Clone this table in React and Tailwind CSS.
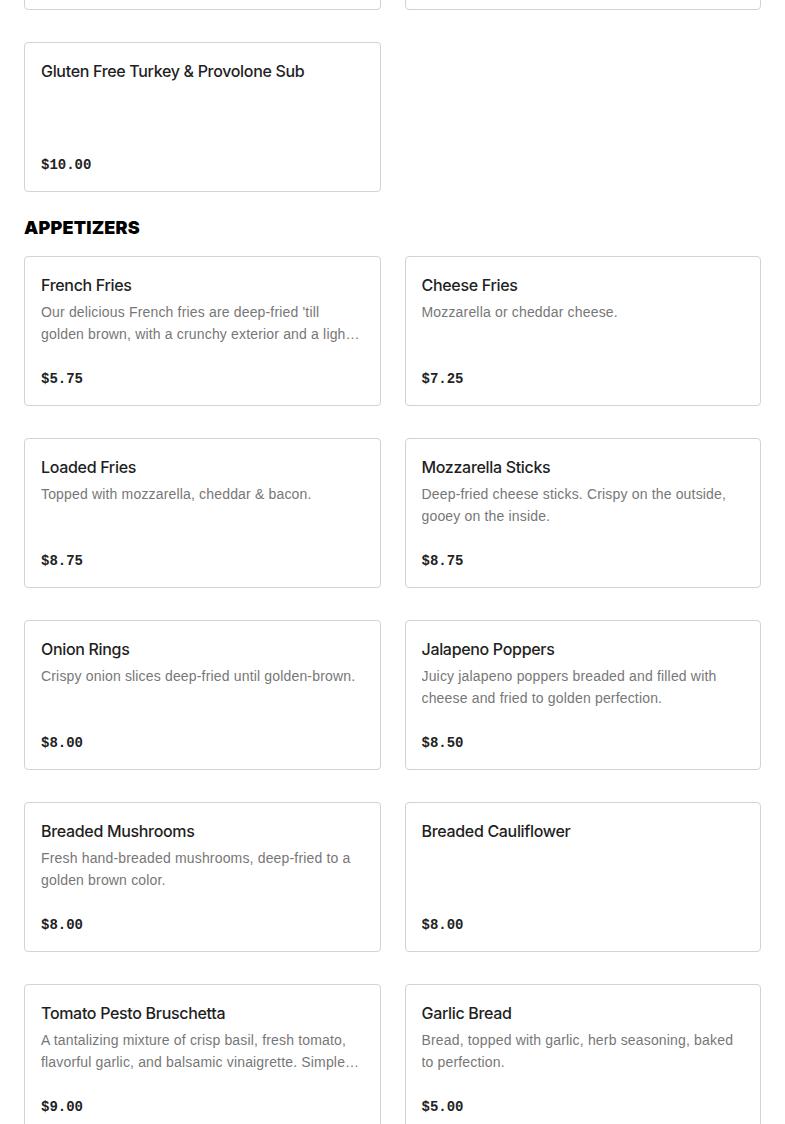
const subs = [{ name: "Gluten Free Turkey & Provolone Sub", desc: "", price: "$10.00" }];
const apps = [
  { name: "French Fries", desc: "Our delicious French fries are deep-fried 'till golden brown, with a crunchy exterior and a light fluffy interior.", price: "$5.75" },
  { name: "Cheese Fries", desc: "Mozzarella or cheddar cheese.", price: "$7.25" },
  { name: "Loaded Fries", desc: "Topped with mozzarella, cheddar & bacon.", price: "$8.75" },
  { name: "Mozzarella Sticks", desc: "Deep-fried cheese sticks. Crispy on the outside, gooey on the inside.", price: "$8.75" },
  { name: "Onion Rings", desc: "Crispy onion slices deep-fried until golden-brown.", price: "$8.00" },
  { name: "Jalapeno Poppers", desc: "Juicy jalapeno poppers breaded and filled with cheese and fried to golden perfection.", price: "$8.50" },
  { name: "Breaded Mushrooms", desc: "Fresh hand-breaded mushrooms, deep-fried to a golden brown color.", price: "$8.00" },
  { name: "Breaded Cauliflower", desc: "", price: "$8.00" },
  { name: "Tomato Pesto Bruschetta", desc: "A tantalizing mixture of crisp basil, fresh tomato, flavorful garlic, and balsamic vinaigrette. Simple and delicious.", price: "$9.00" },
  { name: "Garlic Bread", desc: "Bread, topped with garlic, herb seasoning, baked to perfection.", price: "$5.00" },
];

function Card({ item }) {
  return (
    <div className="h-[150px] border border-[#d3d3d3] rounded-[4px] bg-white px-4 pt-4 pb-[16px] flex flex-col">
      <div className="text-[16px] leading-6 font-medium tracking-[-0.02em] text-[#1f1f1f] truncate">{item.name}</div>
      {item.desc ? (
        <div className="mt-[4px] font-['Liberation_Sans',Arial,sans-serif] text-[14px] leading-[22px] tracking-[0.012em] text-[#777777] line-clamp-2">
          {item.desc}
        </div>
      ) : null}
      <div className="mt-auto font-['Liberation_Mono',monospace] font-bold text-[14px] leading-5 text-[#222222]">{item.price}</div>
    </div>
  );
}

function EmptyCard() {
  return <div className="h-[150px] border border-[#d3d3d3] rounded-[4px] bg-white" />;
}

export default function App() {
  return (
    <div className="bg-white w-[785px] h-[1124px] overflow-hidden font-['Inter',sans-serif]">
      <div className="px-6 -mt-[140px]">
        <div className="grid grid-cols-2 gap-x-6 gap-y-8">
          <EmptyCard />
          <EmptyCard />
          {subs.map((it) => (
            <Card key={it.name} item={it} />
          ))}
        </div>
        <h2 className="mt-[22px] mb-[14px] text-[18px] leading-7 font-black tracking-[0.01em] text-black">APPETIZERS</h2>
        <div className="grid grid-cols-2 gap-x-6 gap-y-8">
          {apps.map((it) => (
            <Card key={it.name} item={it} />
          ))}
        </div>
      </div>
    </div>
  );
}
